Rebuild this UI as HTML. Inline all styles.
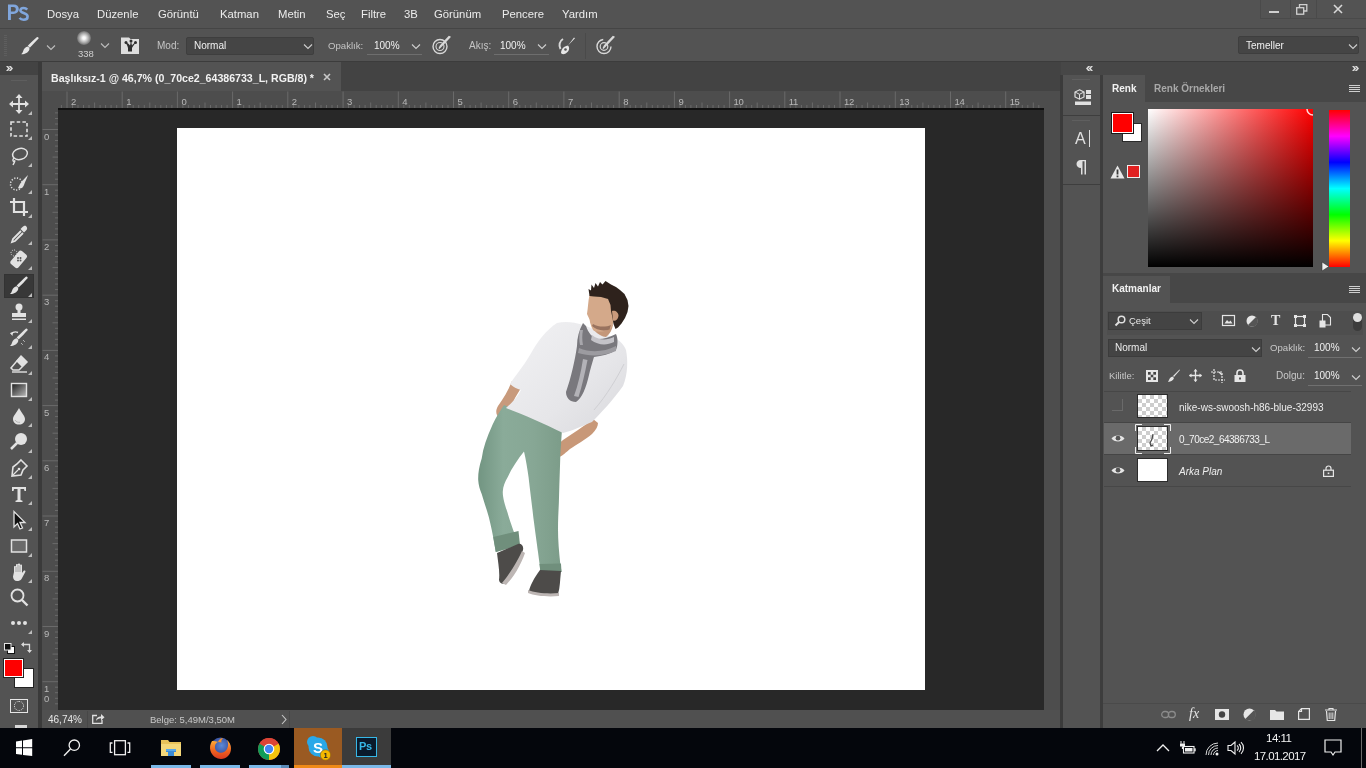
<!DOCTYPE html>
<html><head><meta charset="utf-8">
<style>
*{margin:0;padding:0;box-sizing:border-box}
html,body{width:1366px;height:768px;overflow:hidden;background:#535353}
body{font-family:"Liberation Sans",sans-serif;color:#e6e6e6;position:relative}
.a{position:absolute}
.t{position:absolute;white-space:nowrap;line-height:1;will-change:transform}
svg{position:absolute;overflow:visible}
</style></head><body>
<!-- MENU BAR -->
<div class="a" style="left:0;top:0;width:1366px;height:28px;background:#535353"></div>
<div class="a" style="left:0;top:28px;width:1366px;height:1px;background:#454545"></div>
<svg style="left:7px;top:4px" width="22" height="17" viewBox="0 0 22 17"><path fill-rule="evenodd" d="M1,0.5 L6.5,0.5 C10,0.5 11.8,2.5 11.8,5.1 C11.8,8 9.6,10 6.5,10 L3.9,10 L3.9,16 L1,16 Z M3.9,2.9 L3.9,7.6 L6.2,7.6 C7.9,7.6 8.8,6.6 8.8,5.2 C8.8,3.8 7.9,2.9 6.2,2.9 Z" fill="#80a6dc"/><path d="M20.2,5.6 C19.3,4.5 18,4 16.6,4 C14.6,4 13.4,5 13.4,6.5 C13.4,9.5 20.6,8.6 20.6,12.5 C20.6,14.6 18.9,15.8 16.6,15.8 C14.8,15.8 13.4,15.1 12.6,13.9" fill="none" stroke="#80a6dc" stroke-width="2.6"/></svg>
<div class="t" style="left:47px;top:9px;font-size:11.3px;color:#ececec">Dosya</div>
<div class="t" style="left:97px;top:9px;font-size:11.3px;color:#ececec">Düzenle</div>
<div class="t" style="left:158px;top:9px;font-size:11.3px;color:#ececec">Görüntü</div>
<div class="t" style="left:220px;top:9px;font-size:11.3px;color:#ececec">Katman</div>
<div class="t" style="left:278px;top:9px;font-size:11.3px;color:#ececec">Metin</div>
<div class="t" style="left:326px;top:9px;font-size:11.3px;color:#ececec">Seç</div>
<div class="t" style="left:361px;top:9px;font-size:11.3px;color:#ececec">Filtre</div>
<div class="t" style="left:404px;top:9px;font-size:11.3px;color:#ececec">3B</div>
<div class="t" style="left:434px;top:9px;font-size:11.3px;color:#ececec">Görünüm</div>
<div class="t" style="left:502px;top:9px;font-size:11.3px;color:#ececec">Pencere</div>
<div class="t" style="left:562px;top:9px;font-size:11.3px;color:#ececec">Yardım</div>

<!-- OPTIONS BAR -->
<div class="a" style="left:0;top:29px;width:1366px;height:33px;background:#535353"></div>
<div class="a" style="left:0;top:61px;width:1366px;height:1px;background:#3c3c3c"></div>


<!-- OPTIONS BAR CONTENT -->
<div class="a" style="left:4px;top:35px;width:3px;height:22px;background-image:repeating-linear-gradient(to bottom,#5e5e5e 0,#5e5e5e 1px,transparent 1px,transparent 2px)"></div>
<svg style="left:21px;top:37px" width="18" height="18" viewBox="0 0 18 18"><path d="M17.6,1.6 C15,4.5 11,8.5 8.8,10.8 L6.8,8.8 C9,6.5 13,2.5 15.8,0.2 C16.6,-0.3 18,0.6 17.6,1.6 Z" fill="#e6e6e6"/><path d="M7,9.5 C4.5,9.8 3,11.5 2.2,14 C1.8,15.5 1,16.5 0.3,17.2 C3.5,17.4 7.2,16 8.4,12.5 C8.7,11.5 8.2,10.5 7,9.5 Z" fill="#e6e6e6"/></svg>
<svg style="left:46px;top:44px" width="10" height="7" viewBox="0 0 10 7"><path d="M1,1.5 L5,5.5 L9,1.5" fill="none" stroke="#bdbdbd" stroke-width="1.1"/></svg>
<div class="a" style="left:77px;top:31px;width:14px;height:14px;border-radius:50%;background:radial-gradient(circle,#ffffff 0%,#f4f4f4 15%,rgba(215,215,215,0.7) 45%,rgba(150,150,150,0.25) 75%,rgba(83,83,83,0) 100%)"></div>
<div class="t" style="left:78px;top:49px;font-size:9.5px;color:#d0d0d0">338</div>
<svg style="left:100px;top:42px" width="10" height="7" viewBox="0 0 10 7"><path d="M1,1.5 L5,5.5 L9,1.5" fill="none" stroke="#bdbdbd" stroke-width="1.1"/></svg>
<svg style="left:121px;top:36px" width="18" height="18" viewBox="0 0 18 18"><path d="M0,1.5 L8,1.5 L9.5,3 L18,3 L18,18 L0,18 Z" fill="#dedede"/><path d="M7,15.5 L11,15.5 L11,12 C12,10 13.5,8.5 14.5,6.5 C13,7 12,8 11,9.5 L10,5 L9,9.5 C8,8 6.5,6.8 4.5,6.5 C5.8,8.5 6.5,10 7,12 Z" fill="#2e2e2e"/><circle cx="5" cy="6.5" r="1.5" fill="#2e2e2e"/><circle cx="10" cy="5" r="1.5" fill="#2e2e2e"/><circle cx="14.5" cy="6.5" r="1.5" fill="#2e2e2e"/></svg>
<div class="t" style="left:157px;top:41px;font-size:10px;color:#c4c4c4">Mod:</div>
<div class="a" style="left:186px;top:37px;width:128px;height:18px;background:#454545;border:1px solid #3e3e3e;border-radius:2px"></div>
<div class="t" style="left:194px;top:41px;font-size:10px;color:#f0f0f0">Normal</div>
<svg style="left:303px;top:43px" width="10" height="7" viewBox="0 0 10 7"><path d="M1,1.5 L5,5.5 L9,1.5" fill="none" stroke="#cfcfcf" stroke-width="1.1"/></svg>
<div class="t" style="left:328px;top:41px;font-size:9.6px;color:#c4c4c4">Opaklık:</div>
<div class="t" style="left:374px;top:41px;font-size:10px;color:#f0f0f0">100%</div>
<svg style="left:411px;top:43px" width="10" height="7" viewBox="0 0 10 7"><path d="M1,1.5 L5,5.5 L9,1.5" fill="none" stroke="#cfcfcf" stroke-width="1.1"/></svg>
<div class="a" style="left:367px;top:54px;width:55px;height:1px;background:#6e6e6e"></div>
<svg style="left:432px;top:36px" width="19" height="19" viewBox="0 0 19 19"><circle cx="8" cy="10.5" r="7" fill="none" stroke="#d8d8d8" stroke-width="1.4"/><circle cx="8" cy="10.5" r="4" fill="none" stroke="#d8d8d8" stroke-width="1.1"/><path d="M18,1 L9,10.5 L7,12.5 L8.5,9.5 L17,0.5 Z" fill="#e6e6e6" stroke="#d8d8d8" stroke-width="1.2"/></svg>
<div class="t" style="left:469px;top:41px;font-size:10px;color:#c4c4c4">Akış:</div>
<div class="t" style="left:500px;top:41px;font-size:10px;color:#f0f0f0">100%</div>
<svg style="left:537px;top:43px" width="10" height="7" viewBox="0 0 10 7"><path d="M1,1.5 L5,5.5 L9,1.5" fill="none" stroke="#cfcfcf" stroke-width="1.1"/></svg>
<div class="a" style="left:494px;top:54px;width:55px;height:1px;background:#6e6e6e"></div>
<svg style="left:557px;top:37px" width="19" height="18" viewBox="0 0 19 18"><path d="M6,2 C2.5,4 1.5,8.5 3.5,12" fill="none" stroke="#d8d8d8" stroke-width="2"/><path d="M18,1.2 L11,8.5 C12.5,10 12.5,12.5 11,14.5 C9.5,16.5 7,17.5 5,17 L4,16 C4,14 5,11.5 7,10 C8.5,9 10,8.8 11,8.5 L17,0.5 Z" fill="#e6e6e6"/><circle cx="8.5" cy="12.5" r="1.3" fill="#555"/></svg>
<div class="a" style="left:585px;top:33px;width:1px;height:26px;background:#4a4a4a"></div>
<svg style="left:596px;top:36px" width="19" height="19" viewBox="0 0 19 19"><circle cx="8" cy="10.5" r="7" fill="none" stroke="#d8d8d8" stroke-width="1.4" stroke-dasharray="32,12"/><circle cx="8" cy="10.5" r="3.8" fill="none" stroke="#d8d8d8" stroke-width="1.2"/><path d="M18,1 L9,10.5 L7,12.5 L8.5,9.5 L17,0.5 Z" fill="#e6e6e6" stroke="#d8d8d8" stroke-width="1.2"/></svg>
<!-- workspace dropdown -->
<div class="a" style="left:1238px;top:36px;width:121px;height:18px;background:#454545;border:1px solid #3e3e3e;border-radius:2px"></div>
<div class="t" style="left:1246px;top:41px;font-size:10px;color:#f0f0f0">Temeller</div>
<svg style="left:1348px;top:43px" width="10" height="7" viewBox="0 0 10 7"><path d="M1,1.5 L5,5.5 L9,1.5" fill="none" stroke="#cfcfcf" stroke-width="1.1"/></svg>
<!-- window controls -->
<div class="a" style="left:1260px;top:0;width:106px;height:19px;border-left:1px solid #4a4a4a;border-bottom:1px solid #4a4a4a"></div>
<div class="a" style="left:1290px;top:0;width:1px;height:19px;background:#4a4a4a"></div>
<div class="a" style="left:1316px;top:0;width:1px;height:19px;background:#4a4a4a"></div>
<div class="a" style="left:1269px;top:11px;width:10px;height:2px;background:#d0d0d0"></div>
<svg style="left:1296px;top:4px" width="12" height="11" viewBox="0 0 12 11"><rect x="0.7" y="3.7" width="7" height="6.5" fill="none" stroke="#d0d0d0" stroke-width="1.3"/><path d="M3.5,3.7 L3.5,0.7 L10.8,0.7 L10.8,7 L7.7,7" fill="none" stroke="#d0d0d0" stroke-width="1.3"/></svg>
<svg style="left:1333px;top:4px" width="10" height="10" viewBox="0 0 10 10"><path d="M1,1 L9,9 M9,1 L1,9" stroke="#d8d8d8" stroke-width="1.6"/></svg>
<!-- PANEL STRIP -->
<div class="a" style="left:0;top:62px;width:38px;height:13px;background:#434343"></div>
<div class="a" style="left:38px;top:62px;width:4px;height:666px;background:#3a3a3a"></div>

<!-- TOOLBAR -->
<div class="a" style="left:0;top:75px;width:38px;height:653px;background:#535353"></div>


<!-- TOOLBAR CONTENT -->
<svg style="left:6px;top:66px" width="7" height="5" viewBox="0 0 10 7"><path d="M0,0 L3,0 L6,3.5 L3,7 L0,7 L3,3.5 Z M4,0 L7,0 L10,3.5 L7,7 L4,7 L7,3.5 Z" fill="#d8d8d8"/></svg>
<div class="a" style="left:11px;top:80px;width:16px;height:1px;background:#5e5e5e"></div>
<div class="a" style="left:4px;top:274px;width:30px;height:24px;background:#383838;border:1px solid #333"></div>
<svg style="left:9px;top:94px" width="20" height="20" viewBox="0 0 20 20"><path d="M10,1 L10,19 M1,10 L19,10" stroke="#e2e2e2" stroke-width="1.8"/><path d="M10,0 L6.5,4 L13.5,4 Z M10,20 L6.5,16 L13.5,16 Z M0,10 L4,6.5 L4,13.5 Z M20,10 L16,6.5 L16,13.5 Z" fill="#e2e2e2"/></svg>
<svg style="left:28px;top:111px" width="4" height="4" viewBox="0 0 4 4"><path d="M4,0 L4,4 L0,4 Z" fill="#bdbdbd"/></svg>
<svg style="left:9px;top:119px" width="20" height="20" viewBox="0 0 20 20"><rect x="2" y="3" width="16" height="14" fill="none" stroke="#e2e2e2" stroke-width="1.6" stroke-dasharray="3.5,2.2"/></svg>
<svg style="left:28px;top:136px" width="4" height="4" viewBox="0 0 4 4"><path d="M4,0 L4,4 L0,4 Z" fill="#bdbdbd"/></svg>
<svg style="left:9px;top:146px" width="20" height="20" viewBox="0 0 20 20"><ellipse cx="11" cy="8" rx="7.5" ry="5.5" fill="none" stroke="#e2e2e2" stroke-width="1.5" transform="rotate(-15 11 8)"/><path d="M5,12 C3,14 4,16 5.5,15 C6.5,14 5,17 4,19" fill="none" stroke="#e2e2e2" stroke-width="1.4"/></svg>
<svg style="left:28px;top:163px" width="4" height="4" viewBox="0 0 4 4"><path d="M4,0 L4,4 L0,4 Z" fill="#bdbdbd"/></svg>
<svg style="left:9px;top:173px" width="20" height="20" viewBox="0 0 20 20"><circle cx="7.5" cy="11" r="6" fill="none" stroke="#e2e2e2" stroke-width="1.5" stroke-dasharray="1.2,1.6"/><path d="M19,2 C16,5 13,8 11,11 L9,15 C11,16 14,15 15,12 C16,9 18,5 19,2 Z" fill="#e2e2e2"/></svg>
<svg style="left:28px;top:190px" width="4" height="4" viewBox="0 0 4 4"><path d="M4,0 L4,4 L0,4 Z" fill="#bdbdbd"/></svg>
<svg style="left:9px;top:197px" width="20" height="20" viewBox="0 0 20 20"><path d="M5,1 L5,15 L19,15 M1,5 L15,5 L15,19" fill="none" stroke="#e2e2e2" stroke-width="2.2"/></svg>
<svg style="left:28px;top:214px" width="4" height="4" viewBox="0 0 4 4"><path d="M4,0 L4,4 L0,4 Z" fill="#bdbdbd"/></svg>
<svg style="left:9px;top:224px" width="20" height="20" viewBox="0 0 20 20"><path d="M17,2 C18.5,3.5 18.5,5 17,6.5 L15,8.5 L11.5,5 L13.5,3 C15,1.5 16,1.5 17,2 Z" fill="#e2e2e2"/><path d="M12,7 L4,15 L3,18 L6,17 L14,9" fill="none" stroke="#e2e2e2" stroke-width="1.8"/></svg>
<svg style="left:28px;top:241px" width="4" height="4" viewBox="0 0 4 4"><path d="M4,0 L4,4 L0,4 Z" fill="#bdbdbd"/></svg>
<svg style="left:9px;top:249px" width="20" height="20" viewBox="0 0 20 20"><rect x="5" y="2" width="10" height="17" rx="2.5" transform="rotate(40 10 10)" fill="#e2e2e2"/><circle cx="9" cy="9" r="1" fill="#555"/><circle cx="11.5" cy="9" r="1" fill="#555"/><circle cx="9" cy="11.5" r="1" fill="#555"/><circle cx="11.5" cy="11.5" r="1" fill="#555"/><circle cx="5" cy="4" r="3" fill="none" stroke="#e2e2e2" stroke-width="1" stroke-dasharray="1,1.3"/></svg>
<svg style="left:28px;top:266px" width="4" height="4" viewBox="0 0 4 4"><path d="M4,0 L4,4 L0,4 Z" fill="#bdbdbd"/></svg>
<svg style="left:9px;top:276px" width="20" height="20" viewBox="0 0 20 20"><path d="M18.6,2.2 C16,5 12,9.3 9.6,11.6 L7.6,9.6 C10,7.3 14,3.2 16.8,0.8 C17.6,0.2 19,1.2 18.6,2.2 Z" fill="#e2e2e2"/><path d="M7.8,10.2 C5.3,10.5 3.8,12.2 3,14.7 C2.6,16.2 1.8,17.2 1.1,17.9 C4.3,18.1 8,16.7 9.2,13.2 C9.5,12.2 9,11.2 7.8,10.2 Z" fill="#e2e2e2"/></svg>
<svg style="left:28px;top:293px" width="4" height="4" viewBox="0 0 4 4"><path d="M4,0 L4,4 L0,4 Z" fill="#bdbdbd"/></svg>
<svg style="left:9px;top:302px" width="20" height="20" viewBox="0 0 20 20"><circle cx="10" cy="5" r="3.5" fill="#e2e2e2"/><rect x="8.5" y="7" width="3" height="4" fill="#e2e2e2"/><rect x="3" y="11" width="14" height="4" fill="#e2e2e2"/><rect x="3" y="16.5" width="14" height="1.5" fill="#e2e2e2"/></svg>
<svg style="left:28px;top:319px" width="4" height="4" viewBox="0 0 4 4"><path d="M4,0 L4,4 L0,4 Z" fill="#bdbdbd"/></svg>
<svg style="left:9px;top:328px" width="20" height="20" viewBox="0 0 20 20"><path d="M18.6,2.2 C16,5 12,9.3 9.6,11.6 L7.6,9.6 C10,7.3 14,3.2 16.8,0.8 C17.6,0.2 19,1.2 18.6,2.2 Z" fill="#e2e2e2"/><path d="M7.8,10.2 C5.3,10.5 3.8,12.2 3,14.7 C2.6,16.2 1.8,17.2 1.1,17.9 C4.3,18.1 8,16.7 9.2,13.2 C9.5,12.2 9,11.2 7.8,10.2 Z" fill="#e2e2e2"/><path d="M2,6 C4,4 7,3.5 9,4.5" fill="none" stroke="#e2e2e2" stroke-width="1.4"/><path d="M1,5 L3.5,8 L4,4 Z" fill="#e2e2e2"/><path d="M14,12 L16,14 M12,15 L14,17" stroke="#e2e2e2" stroke-width="1" stroke-dasharray="1,1"/></svg>
<svg style="left:28px;top:345px" width="4" height="4" viewBox="0 0 4 4"><path d="M4,0 L4,4 L0,4 Z" fill="#bdbdbd"/></svg>
<svg style="left:9px;top:354px" width="20" height="20" viewBox="0 0 20 20"><path d="M12,2 L18,8 L10,16 L4,16 L2,14 Z" fill="none" stroke="#e2e2e2" stroke-width="1.5"/><path d="M12,2 L18,8 L13,13 L7,7 Z" fill="#e2e2e2"/><path d="M3,18 L18,18" stroke="#e2e2e2" stroke-width="1.4"/></svg>
<svg style="left:28px;top:371px" width="4" height="4" viewBox="0 0 4 4"><path d="M4,0 L4,4 L0,4 Z" fill="#bdbdbd"/></svg>
<svg style="left:9px;top:380px" width="20" height="20" viewBox="0 0 20 20"><defs><linearGradient id="gr" x1="0" y1="0" x2="1" y2="1"><stop offset="0" stop-color="#1a1a1a"/><stop offset="1" stop-color="#bcbcbc"/></linearGradient></defs><rect x="2.5" y="3.5" width="15" height="13" fill="url(#gr)" stroke="#e2e2e2" stroke-width="1.4"/></svg>
<svg style="left:28px;top:397px" width="4" height="4" viewBox="0 0 4 4"><path d="M4,0 L4,4 L0,4 Z" fill="#bdbdbd"/></svg>
<svg style="left:9px;top:406px" width="20" height="20" viewBox="0 0 20 20"><path d="M10,2 C12,6 16,10 16,13 C16,16.5 13.5,18.5 10,18.5 C6.5,18.5 4,16.5 4,13 C4,10 8,6 10,2 Z" fill="#e2e2e2"/><path d="M6,14 C7,16 9,16.5 11,16.3" fill="none" stroke="#aaa" stroke-width="0.8"/></svg>
<svg style="left:28px;top:423px" width="4" height="4" viewBox="0 0 4 4"><path d="M4,0 L4,4 L0,4 Z" fill="#bdbdbd"/></svg>
<svg style="left:9px;top:432px" width="20" height="20" viewBox="0 0 20 20"><circle cx="12" cy="7" r="6" fill="#e2e2e2"/><path d="M8,11 L2,17" stroke="#e2e2e2" stroke-width="2.5"/></svg>
<svg style="left:28px;top:449px" width="4" height="4" viewBox="0 0 4 4"><path d="M4,0 L4,4 L0,4 Z" fill="#bdbdbd"/></svg>
<svg style="left:9px;top:458px" width="20" height="20" viewBox="0 0 20 20"><path d="M12,2 L18,8 L14,12 L12,17 L3,18 L4,9 L8,6 Z" fill="none" stroke="#e2e2e2" stroke-width="1.6"/><path d="M4,17 L9,12" stroke="#e2e2e2" stroke-width="1.2"/><circle cx="10" cy="11" r="1.3" fill="#e2e2e2"/></svg>
<svg style="left:28px;top:475px" width="4" height="4" viewBox="0 0 4 4"><path d="M4,0 L4,4 L0,4 Z" fill="#bdbdbd"/></svg>
<svg style="left:9px;top:484px" width="20" height="20" viewBox="0 0 20 20"><path d="M3,3 L17,3 L17,7 L15.5,7 L15,5 L11.5,5 L11.5,16 L13.5,16.8 L13.5,18 L6.5,18 L6.5,16.8 L8.5,16 L8.5,5 L5,5 L4.5,7 L3,7 Z" fill="#e2e2e2"/></svg>
<svg style="left:28px;top:501px" width="4" height="4" viewBox="0 0 4 4"><path d="M4,0 L4,4 L0,4 Z" fill="#bdbdbd"/></svg>
<svg style="left:9px;top:510px" width="20" height="20" viewBox="0 0 20 20"><path d="M5,1.5 L5,17 L8.5,13.5 L11,19 L13.5,18 L11,12.5 L16,12.5 Z" fill="#111" stroke="#e2e2e2" stroke-width="1.3"/></svg>
<svg style="left:28px;top:527px" width="4" height="4" viewBox="0 0 4 4"><path d="M4,0 L4,4 L0,4 Z" fill="#bdbdbd"/></svg>
<svg style="left:9px;top:536px" width="20" height="20" viewBox="0 0 20 20"><rect x="2.5" y="4" width="15" height="12" fill="#6a6a6a" stroke="#e2e2e2" stroke-width="1.5"/></svg>
<svg style="left:28px;top:553px" width="4" height="4" viewBox="0 0 4 4"><path d="M4,0 L4,4 L0,4 Z" fill="#bdbdbd"/></svg>
<svg style="left:9px;top:562px" width="20" height="20" viewBox="0 0 20 20"><path d="M5,10 L5,5 C5,3.8 7,3.8 7,5 L7,3 C7,1.8 9,1.8 9,3 L9,2.5 C9,1.3 11,1.3 11,2.5 L11,3.5 C11,2.3 13,2.3 13,3.5 L13,11 L14.5,9 C15.5,8 17,8.8 16.3,10 L12.5,17 C11.5,18.5 10,19 8,19 C5.5,19 4,17 4,14.5 Z" fill="#e2e2e2"/><path d="M7,5 L7,10 M9,3 L9,10 M11,3.5 L11,10" stroke="#888" stroke-width="0.7"/></svg>
<svg style="left:28px;top:579px" width="4" height="4" viewBox="0 0 4 4"><path d="M4,0 L4,4 L0,4 Z" fill="#bdbdbd"/></svg>
<svg style="left:9px;top:587px" width="20" height="20" viewBox="0 0 20 20"><circle cx="8.5" cy="8.5" r="6" fill="none" stroke="#e2e2e2" stroke-width="1.8"/><path d="M13,13 L18.5,18.5" stroke="#e2e2e2" stroke-width="2.4"/></svg>
<svg style="left:9px;top:613px" width="20" height="20" viewBox="0 0 20 20"><circle cx="4" cy="10" r="2" fill="#e2e2e2"/><circle cx="10" cy="10" r="2" fill="#e2e2e2"/><circle cx="16" cy="10" r="2" fill="#e2e2e2"/></svg>
<svg style="left:28px;top:630px" width="4" height="4" viewBox="0 0 4 4"><path d="M4,0 L4,4 L0,4 Z" fill="#bdbdbd"/></svg>
<svg style="left:4px;top:643px" width="11" height="11" viewBox="0 0 11 11"><rect x="3.5" y="3.5" width="7" height="7" fill="#fff" stroke="#111" stroke-width="1"/><rect x="0.5" y="0.5" width="6.5" height="6.5" fill="#111" stroke="#e6e6e6" stroke-width="1"/></svg>
<svg style="left:21px;top:641px" width="12" height="12" viewBox="0 0 12 12"><path d="M1,3.5 L8.5,3.5 L8.5,11" fill="none" stroke="#d8d8d8" stroke-width="1.3"/><path d="M0,3.5 L3,1 L3,6 Z M8.5,12 L6,9 L11,9 Z" fill="#d8d8d8"/></svg>
<div class="a" style="left:14px;top:668px;width:20px;height:20px;background:#fff;border:1px solid #222"></div>
<div class="a" style="left:4px;top:659px;width:19px;height:18px;background:#fe0000;border:1px solid #fff;outline:1px solid #222"></div>
<div class="a" style="left:10px;top:699px;width:18px;height:14px;border:1px solid #e6e6e6"></div>
<div class="a" style="left:14px;top:701px;width:10px;height:10px;border:1px dotted #e6e6e6;border-radius:50%"></div>
<div class="a" style="left:15px;top:725px;width:12px;height:3px;background:#d8d8d8"></div>
<!-- DOC TAB BAR -->
<div class="a" style="left:42px;top:62px;width:1019px;height:29px;background:#434343"></div>
<div class="a" style="left:42px;top:62px;width:299px;height:29px;background:#535353"></div>
<div class="t" style="left:51px;top:73px;font-size:10.6px;font-weight:700;color:#f2f2f2">Başlıksız-1 @ 46,7% (0_70ce2_64386733_L, RGB/8) *</div>

<!-- RULERS -->
<div class="a" style="left:42px;top:91px;width:1019px;height:17px;background:#4d4d4d"></div>
<div class="a" style="left:42px;top:91px;width:16px;height:619px;background:#4d4d4d"></div>


<!-- RULER TICKS -->
<svg style="left:0;top:0" width="1366" height="768" viewBox="0 0 1366 768">
<path d="M61.4,105 L61.4,108 M67.0,91.5 L67.0,108 M72.5,105 L72.5,108 M78.0,105 L78.0,108 M83.5,105 L83.5,108 M89.0,105 L89.0,108 M94.6,102.5 L94.6,108 M100.1,105 L100.1,108 M105.6,105 L105.6,108 M111.1,105 L111.1,108 M116.7,105 L116.7,108 M122.2,91.5 L122.2,108 M127.7,105 L127.7,108 M133.2,105 L133.2,108 M138.7,105 L138.7,108 M144.3,105 L144.3,108 M149.8,102.5 L149.8,108 M155.3,105 L155.3,108 M160.8,105 L160.8,108 M166.4,105 L166.4,108 M171.9,105 L171.9,108 M177.4,91.5 L177.4,108 M182.9,105 L182.9,108 M188.4,105 L188.4,108 M194.0,105 L194.0,108 M199.5,105 L199.5,108 M205.0,102.5 L205.0,108 M210.5,105 L210.5,108 M216.1,105 L216.1,108 M221.6,105 L221.6,108 M227.1,105 L227.1,108 M232.6,91.5 L232.6,108 M238.1,105 L238.1,108 M243.7,105 L243.7,108 M249.2,105 L249.2,108 M254.7,105 L254.7,108 M260.2,102.5 L260.2,108 M265.8,105 L265.8,108 M271.3,105 L271.3,108 M276.8,105 L276.8,108 M282.3,105 L282.3,108 M287.8,91.5 L287.8,108 M293.4,105 L293.4,108 M298.9,105 L298.9,108 M304.4,105 L304.4,108 M309.9,105 L309.9,108 M315.5,102.5 L315.5,108 M321.0,105 L321.0,108 M326.5,105 L326.5,108 M332.0,105 L332.0,108 M337.5,105 L337.5,108 M343.1,91.5 L343.1,108 M348.6,105 L348.6,108 M354.1,105 L354.1,108 M359.6,105 L359.6,108 M365.1,105 L365.1,108 M370.7,102.5 L370.7,108 M376.2,105 L376.2,108 M381.7,105 L381.7,108 M387.2,105 L387.2,108 M392.8,105 L392.8,108 M398.3,91.5 L398.3,108 M403.8,105 L403.8,108 M409.3,105 L409.3,108 M414.8,105 L414.8,108 M420.4,105 L420.4,108 M425.9,102.5 L425.9,108 M431.4,105 L431.4,108 M436.9,105 L436.9,108 M442.5,105 L442.5,108 M448.0,105 L448.0,108 M453.5,91.5 L453.5,108 M459.0,105 L459.0,108 M464.5,105 L464.5,108 M470.1,105 L470.1,108 M475.6,105 L475.6,108 M481.1,102.5 L481.1,108 M486.6,105 L486.6,108 M492.2,105 L492.2,108 M497.7,105 L497.7,108 M503.2,105 L503.2,108 M508.7,91.5 L508.7,108 M514.2,105 L514.2,108 M519.8,105 L519.8,108 M525.3,105 L525.3,108 M530.8,105 L530.8,108 M536.3,102.5 L536.3,108 M541.9,105 L541.9,108 M547.4,105 L547.4,108 M552.9,105 L552.9,108 M558.4,105 L558.4,108 M563.9,91.5 L563.9,108 M569.5,105 L569.5,108 M575.0,105 L575.0,108 M580.5,105 L580.5,108 M586.0,105 L586.0,108 M591.5,102.5 L591.5,108 M597.1,105 L597.1,108 M602.6,105 L602.6,108 M608.1,105 L608.1,108 M613.6,105 L613.6,108 M619.2,91.5 L619.2,108 M624.7,105 L624.7,108 M630.2,105 L630.2,108 M635.7,105 L635.7,108 M641.2,105 L641.2,108 M646.8,102.5 L646.8,108 M652.3,105 L652.3,108 M657.8,105 L657.8,108 M663.3,105 L663.3,108 M668.9,105 L668.9,108 M674.4,91.5 L674.4,108 M679.9,105 L679.9,108 M685.4,105 L685.4,108 M690.9,105 L690.9,108 M696.5,105 L696.5,108 M702.0,102.5 L702.0,108 M707.5,105 L707.5,108 M713.0,105 L713.0,108 M718.6,105 L718.6,108 M724.1,105 L724.1,108 M729.6,91.5 L729.6,108 M735.1,105 L735.1,108 M740.6,105 L740.6,108 M746.2,105 L746.2,108 M751.7,105 L751.7,108 M757.2,102.5 L757.2,108 M762.7,105 L762.7,108 M768.3,105 L768.3,108 M773.8,105 L773.8,108 M779.3,105 L779.3,108 M784.8,91.5 L784.8,108 M790.3,105 L790.3,108 M795.9,105 L795.9,108 M801.4,105 L801.4,108 M806.9,105 L806.9,108 M812.4,102.5 L812.4,108 M818.0,105 L818.0,108 M823.5,105 L823.5,108 M829.0,105 L829.0,108 M834.5,105 L834.5,108 M840.0,91.5 L840.0,108 M845.6,105 L845.6,108 M851.1,105 L851.1,108 M856.6,105 L856.6,108 M862.1,105 L862.1,108 M867.6,102.5 L867.6,108 M873.2,105 L873.2,108 M878.7,105 L878.7,108 M884.2,105 L884.2,108 M889.7,105 L889.7,108 M895.3,91.5 L895.3,108 M900.8,105 L900.8,108 M906.3,105 L906.3,108 M911.8,105 L911.8,108 M917.3,105 L917.3,108 M922.9,102.5 L922.9,108 M928.4,105 L928.4,108 M933.9,105 L933.9,108 M939.4,105 L939.4,108 M945.0,105 L945.0,108 M950.5,91.5 L950.5,108 M956.0,105 L956.0,108 M961.5,105 L961.5,108 M967.0,105 L967.0,108 M972.6,105 L972.6,108 M978.1,102.5 L978.1,108 M983.6,105 L983.6,108 M989.1,105 L989.1,108 M994.7,105 L994.7,108 M1000.2,105 L1000.2,108 M1005.7,91.5 L1005.7,108 M1011.2,105 L1011.2,108 M1016.7,105 L1016.7,108 M1022.3,105 L1022.3,108 M1027.8,105 L1027.8,108 M1033.3,102.5 L1033.3,108 M1038.8,105 L1038.8,108" stroke="#6a6a6a" stroke-width="1" fill="none"/>
<text x="71.0" y="104.5" font-size="9.5" letter-spacing="-0.4" fill="#b8b8b8" font-family="Liberation Sans">2</text>
<text x="126.2" y="104.5" font-size="9.5" letter-spacing="-0.4" fill="#b8b8b8" font-family="Liberation Sans">1</text>
<text x="181.4" y="104.5" font-size="9.5" letter-spacing="-0.4" fill="#b8b8b8" font-family="Liberation Sans">0</text>
<text x="236.6" y="104.5" font-size="9.5" letter-spacing="-0.4" fill="#b8b8b8" font-family="Liberation Sans">1</text>
<text x="291.8" y="104.5" font-size="9.5" letter-spacing="-0.4" fill="#b8b8b8" font-family="Liberation Sans">2</text>
<text x="347.1" y="104.5" font-size="9.5" letter-spacing="-0.4" fill="#b8b8b8" font-family="Liberation Sans">3</text>
<text x="402.3" y="104.5" font-size="9.5" letter-spacing="-0.4" fill="#b8b8b8" font-family="Liberation Sans">4</text>
<text x="457.5" y="104.5" font-size="9.5" letter-spacing="-0.4" fill="#b8b8b8" font-family="Liberation Sans">5</text>
<text x="512.7" y="104.5" font-size="9.5" letter-spacing="-0.4" fill="#b8b8b8" font-family="Liberation Sans">6</text>
<text x="567.9" y="104.5" font-size="9.5" letter-spacing="-0.4" fill="#b8b8b8" font-family="Liberation Sans">7</text>
<text x="623.2" y="104.5" font-size="9.5" letter-spacing="-0.4" fill="#b8b8b8" font-family="Liberation Sans">8</text>
<text x="678.4" y="104.5" font-size="9.5" letter-spacing="-0.4" fill="#b8b8b8" font-family="Liberation Sans">9</text>
<text x="733.6" y="104.5" font-size="9.5" letter-spacing="-0.4" fill="#b8b8b8" font-family="Liberation Sans">10</text>
<text x="788.8" y="104.5" font-size="9.5" letter-spacing="-0.4" fill="#b8b8b8" font-family="Liberation Sans">11</text>
<text x="844.0" y="104.5" font-size="9.5" letter-spacing="-0.4" fill="#b8b8b8" font-family="Liberation Sans">12</text>
<text x="899.3" y="104.5" font-size="9.5" letter-spacing="-0.4" fill="#b8b8b8" font-family="Liberation Sans">13</text>
<text x="954.5" y="104.5" font-size="9.5" letter-spacing="-0.4" fill="#b8b8b8" font-family="Liberation Sans">14</text>
<text x="1009.7" y="104.5" font-size="9.5" letter-spacing="-0.4" fill="#b8b8b8" font-family="Liberation Sans">15</text>
<path d="M55,112.9 L58,112.9 M55,118.5 L58,118.5 M55,124.0 L58,124.0 M42.5,129.5 L58,129.5 M55,135.0 L58,135.0 M55,140.5 L58,140.5 M55,146.1 L58,146.1 M55,151.6 L58,151.6 M52.5,157.1 L58,157.1 M55,162.6 L58,162.6 M55,168.2 L58,168.2 M55,173.7 L58,173.7 M55,179.2 L58,179.2 M42.5,184.7 L58,184.7 M55,190.2 L58,190.2 M55,195.8 L58,195.8 M55,201.3 L58,201.3 M55,206.8 L58,206.8 M52.5,212.3 L58,212.3 M55,217.9 L58,217.9 M55,223.4 L58,223.4 M55,228.9 L58,228.9 M55,234.4 L58,234.4 M42.5,239.9 L58,239.9 M55,245.5 L58,245.5 M55,251.0 L58,251.0 M55,256.5 L58,256.5 M55,262.0 L58,262.0 M52.5,267.6 L58,267.6 M55,273.1 L58,273.1 M55,278.6 L58,278.6 M55,284.1 L58,284.1 M55,289.6 L58,289.6 M42.5,295.2 L58,295.2 M55,300.7 L58,300.7 M55,306.2 L58,306.2 M55,311.7 L58,311.7 M55,317.2 L58,317.2 M52.5,322.8 L58,322.8 M55,328.3 L58,328.3 M55,333.8 L58,333.8 M55,339.3 L58,339.3 M55,344.9 L58,344.9 M42.5,350.4 L58,350.4 M55,355.9 L58,355.9 M55,361.4 L58,361.4 M55,366.9 L58,366.9 M55,372.5 L58,372.5 M52.5,378.0 L58,378.0 M55,383.5 L58,383.5 M55,389.0 L58,389.0 M55,394.6 L58,394.6 M55,400.1 L58,400.1 M42.5,405.6 L58,405.6 M55,411.1 L58,411.1 M55,416.6 L58,416.6 M55,422.2 L58,422.2 M55,427.7 L58,427.7 M52.5,433.2 L58,433.2 M55,438.7 L58,438.7 M55,444.3 L58,444.3 M55,449.8 L58,449.8 M55,455.3 L58,455.3 M42.5,460.8 L58,460.8 M55,466.3 L58,466.3 M55,471.9 L58,471.9 M55,477.4 L58,477.4 M55,482.9 L58,482.9 M52.5,488.4 L58,488.4 M55,494.0 L58,494.0 M55,499.5 L58,499.5 M55,505.0 L58,505.0 M55,510.5 L58,510.5 M42.5,516.0 L58,516.0 M55,521.6 L58,521.6 M55,527.1 L58,527.1 M55,532.6 L58,532.6 M55,538.1 L58,538.1 M52.5,543.6 L58,543.6 M55,549.2 L58,549.2 M55,554.7 L58,554.7 M55,560.2 L58,560.2 M55,565.7 L58,565.7 M42.5,571.3 L58,571.3 M55,576.8 L58,576.8 M55,582.3 L58,582.3 M55,587.8 L58,587.8 M55,593.3 L58,593.3 M52.5,598.9 L58,598.9 M55,604.4 L58,604.4 M55,609.9 L58,609.9 M55,615.4 L58,615.4 M55,621.0 L58,621.0 M42.5,626.5 L58,626.5 M55,632.0 L58,632.0 M55,637.5 L58,637.5 M55,643.0 L58,643.0 M55,648.6 L58,648.6 M52.5,654.1 L58,654.1 M55,659.6 L58,659.6 M55,665.1 L58,665.1 M55,670.7 L58,670.7 M55,676.2 L58,676.2 M42.5,681.7 L58,681.7 M55,687.2 L58,687.2 M55,692.7 L58,692.7 M55,698.3 L58,698.3 M55,703.8 L58,703.8" stroke="#6a6a6a" stroke-width="1" fill="none"/>
<text x="44" y="139.5" font-size="9.5" fill="#b8b8b8" font-family="Liberation Sans">0</text>
<text x="44" y="194.7" font-size="9.5" fill="#b8b8b8" font-family="Liberation Sans">1</text>
<text x="44" y="249.9" font-size="9.5" fill="#b8b8b8" font-family="Liberation Sans">2</text>
<text x="44" y="305.2" font-size="9.5" fill="#b8b8b8" font-family="Liberation Sans">3</text>
<text x="44" y="360.4" font-size="9.5" fill="#b8b8b8" font-family="Liberation Sans">4</text>
<text x="44" y="415.6" font-size="9.5" fill="#b8b8b8" font-family="Liberation Sans">5</text>
<text x="44" y="470.8" font-size="9.5" fill="#b8b8b8" font-family="Liberation Sans">6</text>
<text x="44" y="526.0" font-size="9.5" fill="#b8b8b8" font-family="Liberation Sans">7</text>
<text x="44" y="581.3" font-size="9.5" fill="#b8b8b8" font-family="Liberation Sans">8</text>
<text x="44" y="636.5" font-size="9.5" fill="#b8b8b8" font-family="Liberation Sans">9</text>
<text x="44" y="691.7" font-size="9.5" fill="#b8b8b8" font-family="Liberation Sans">1</text>
<text x="44" y="701.7" font-size="9.5" fill="#b8b8b8" font-family="Liberation Sans">0</text>
</svg>
<!-- CANVAS -->
<div class="a" style="left:58px;top:108px;width:986px;height:602px;background:#282828"></div>
<div class="a" style="left:58px;top:108px;width:986px;height:2px;background:#111"></div>
<div class="a" style="left:177px;top:128px;width:748px;height:562px;background:#ffffff"></div>

<!-- FIGURE -->
<svg class="a" style="left:0;top:0" width="1366" height="768" viewBox="0 0 1366 768">
<defs>
<linearGradient id="pg" x1="0" y1="0" x2="1" y2="0"><stop offset="0" stop-color="#729582"/><stop offset="0.3" stop-color="#8aab99"/><stop offset="0.65" stop-color="#87a795"/><stop offset="1" stop-color="#7c9c89"/></linearGradient>
<linearGradient id="sg" x1="0" y1="0" x2="1" y2="1"><stop offset="0" stop-color="#f2f2f4"/><stop offset="0.6" stop-color="#e6e6e9"/><stop offset="1" stop-color="#d8d8dc"/></linearGradient>
<filter id="soft" x="-10%" y="-10%" width="120%" height="120%"><feGaussianBlur stdDeviation="0.45"/></filter>
</defs>
<g filter="url(#soft)">
<!-- left forearm/hand -->
<path d="M512,381 C508,391 503,399 498,406 C495,411 496,416 500,418 C505,415 510,410 515,398 L521,388 Z" fill="#c89a7b"/>
<!-- right forearm/hand -->
<path d="M593,419 C583,427 572,434 563,440 C557,444 556,452 559,457 C563,456 566,452 570,449 C576,445 585,440 592,434 C596,430 598,426 598,423 Z" fill="#c89878"/>
<!-- pants -->
<path d="M504,405 C498,414 494,421 492,426 C487,437 483,448 481.7,458.6 C479,467 478,474 478.2,480 C478.5,485 480,490 481.7,494 C484,502 487,510 488.8,517 C491,526 493,535 494,542 L495.8,552 L520,545 C517,540 515.5,535 514.6,533.7 C511,524 509,518 507.5,512.6 C505,505 502.5,497 502.8,491.5 C503,486 505,482 507.5,477.4 C512,468 518,459 524,451.6 C526,460 527.5,470 528.6,477.4 C530,490 532,505 533.3,517.3 C535,530 537,545 538,552 C539,560 540,566 540.4,572 L561.5,572 C561,567 560.5,566 560.3,564 C559,552 558,540 558,529 C558,515 559,505 559.1,494 C559.5,480 560,468 560.3,456 C561,446 561.5,436 562,430 C543,422 523,413 504,405 Z" fill="url(#pg)"/>
<!-- cuffs darker -->
<path d="M493.3,537 L518.5,531 L520,545 L495.8,552 Z" fill="#6f8f7b"/>
<path d="M539.5,564 L561,563.5 L561.5,572 L540.4,572 Z" fill="#6f8f7b"/>
<!-- shoes -->
<path d="M497,553 C498,562 500,572 499,580 C500,585 505,585 509,580 C515,570 520,560 523,550 C524,546 521,543 518,544 Z" fill="#4d4c4a"/>
<path d="M502,583 C509,575 517,562 522,551 L525,553 C521,565 513,578 506,585 Z" fill="#bdb6b4"/>
<path d="M540,570 C534,578 530,586 529,591 C532,594 546,595 558,594 C560,588 560,580 561,571 Z" fill="#4d4c4a"/>
<path d="M528,590 C535,593 548,594 559,593 L559,596 C548,597 535,596 528,593 Z" fill="#bdb6b4"/>
<!-- shirt -->
<path d="M557,323 C546,330 537,342 530,355 C523,367 515,376 510,384 C513,387 517,389 521,390 C518,396 513,402 506,408 C524,415 545,424 563,433 C572,431 582,426 592,422 C601,413 613,400 623,386 C628,374 628,360 626,350 C623,343 619,340 614,338 C604,333 594,329 583,325 C574,322 565,321 557,323 Z" fill="url(#sg)"/>
<path d="M624,364 C617,378 607,395 594,410" fill="none" stroke="#cfcfd3" stroke-width="1"/>
<!-- neck -->
<path d="M590,320 C592,330 598,336 606,337 C610,334 612,330 613,325 L604,316 Z" fill="#c49779"/>
<!-- scarf -->
<path d="M583,323 C579,330 577,338 577,346 C575,360 571,378 566,392 C566,398 570,402 576,402 C582,398 586,388 589,375 C591,367 593,360 594,357 C602,356 610,354 616,350 C618,345 618,338 616,334 C610,337 604,339 598,339 C592,338 588,332 586,326 Z" fill="#79787d"/>
<path d="M592,335 C598,340 606,341 614,337 L614,342 C606,346 598,345 591,340 Z" fill="#c4c3c8"/>
<path d="M579,348 C591,353 604,352 616,346 L616,351 C604,356 591,357 578,353 Z" fill="#9c9ba0"/>
<path d="M583,359 C581,372 578,385 574,396 L578.5,397 C582,386 585,373 587.5,360 Z" fill="#b3b2b7"/>
<path d="M580,330 C579,336 579,341 580,345 L583,345 C582,340 582,335 583,330 Z" fill="#a8a7ac"/>
<!-- face -->
<path d="M589.5,295 C588,302 588,308 587,314 C588,317 590,319 590,322 C591,326 592,329 594,331 C600,332.5 607,331.5 611,328 C614,323 615,316 614,310 C613,305 611,300 607,298 C601,296 595,295 589.5,295 Z" fill="#d4a98a"/>
<!-- hair -->
<path d="M588.5,289 L591,290.5 L591.5,284.5 L594,288 L595.5,283 L598,286.5 L600,282 L602.5,284.5 L605.5,281 L611,284.5 L616,287 L620,290 L624.5,294 L627.5,300 L628.5,306 L627.5,312 L625,318 L621.5,323.5 L618,327.5 L615.5,329 L613.5,324 L612.5,318 L611,311 L610.5,305 L608,299 L601,297 L594,296.5 L589.5,296 Z" fill="#2e241d"/>
<path d="M612,311 C615,310 618.5,312 618.5,316 C618,320 615,321.5 613,320.5 Z" fill="#c99a7b"/>
<path d="M592,326 C596,330 603,331.5 609.5,329.5 L611,325 C606,327 599,327.5 593,324 Z" fill="#86624f" opacity="0.75"/>
</g>
</svg>
<!-- right scroll area -->
<div class="a" style="left:1044px;top:108px;width:17px;height:602px;background:#4d4d4d"></div>

<!-- STATUS BAR -->
<div class="a" style="left:42px;top:710px;width:1019px;height:18px;background:#505050"></div>
<div class="t" style="left:48px;top:715px;font-size:10px;color:#e6e6e6">46,74%</div>
<div class="a" style="left:87px;top:711px;width:1px;height:17px;background:#474747"></div>
<svg style="left:92px;top:713px" width="13" height="11" viewBox="0 0 13 11"><path d="M5,2.5 L0.7,2.5 L0.7,10.3 L10,10.3 L10,7" fill="none" stroke="#e0e0e0" stroke-width="1.3"/><path d="M4,8 C4,5 6,3.5 9,3.5 L9,1 L12.5,4.2 L9,7.5 L9,5.2 C7,5.2 5,6 4,8 Z" fill="#e0e0e0"/></svg>
<div class="t" style="left:150px;top:715px;font-size:9.5px;color:#c8c8c8">Belge: 5,49M/3,50M</div>
<svg style="left:281px;top:714px" width="6" height="11" viewBox="0 0 6 11"><path d="M1,1 L5,5.5 L1,10" fill="none" stroke="#c8c8c8" stroke-width="1.1"/></svg>
<div class="a" style="left:289px;top:711px;width:1px;height:17px;background:#474747"></div>

<!-- DOCK -->
<div class="a" style="left:1061px;top:62px;width:305px;height:666px;background:#474747"></div>
<div class="a" style="left:1060px;top:75px;width:3px;height:653px;background:#3b3b3b"></div>
<div class="a" style="left:1100px;top:75px;width:3px;height:653px;background:#3d3d3d"></div>
<div class="a" style="left:1063px;top:75px;width:37px;height:653px;background:#535353"></div>
<div class="a" style="left:1103px;top:75px;width:263px;height:27px;background:#474747"></div>
<div class="a" style="left:1103px;top:75px;width:42px;height:27px;background:#535353"></div>
<div class="a" style="left:1103px;top:102px;width:263px;height:171px;background:#535353"></div>
<div class="a" style="left:1103px;top:276px;width:263px;height:27px;background:#474747"></div>
<div class="a" style="left:1103px;top:276px;width:67px;height:27px;background:#535353"></div>
<div class="a" style="left:1103px;top:303px;width:263px;height:425px;background:#535353"></div>



<!-- DOCK HEADERS + ICON COLUMN -->
<svg style="left:1086px;top:66px" width="7" height="5" viewBox="0 0 10 7"><path d="M10,0 L7,0 L4,3.5 L7,7 L10,7 L7,3.5 Z M6,0 L3,0 L0,3.5 L3,7 L6,7 L3,3.5 Z" fill="#d8d8d8"/></svg>
<svg style="left:1352px;top:66px" width="7" height="5" viewBox="0 0 10 7"><path d="M0,0 L3,0 L6,3.5 L3,7 L0,7 L3,3.5 Z M4,0 L7,0 L10,3.5 L7,7 L4,7 L7,3.5 Z" fill="#d8d8d8"/></svg>
<div class="a" style="left:1063px;top:115px;width:37px;height:1px;background:#3e3e3e"></div>
<div class="a" style="left:1063px;top:184px;width:37px;height:1px;background:#3e3e3e"></div>
<div class="a" style="left:1072px;top:79px;width:18px;height:1px;background:#5f5f5f"></div>
<div class="a" style="left:1072px;top:120px;width:18px;height:1px;background:#5f5f5f"></div>
<svg style="left:1074px;top:89px" width="18" height="17" viewBox="0 0 18 17"><path d="M5.5,0.8 L10,3 L10,8 L5.5,10.2 L1,8 L1,3 Z" fill="none" stroke="#e0e0e0" stroke-width="1.2"/><path d="M1,3 L5.5,5.3 L10,3 M5.5,5.3 L5.5,10.2" fill="none" stroke="#e0e0e0" stroke-width="1"/><rect x="12" y="1" width="5" height="4" fill="#e0e0e0"/><rect x="12" y="6" width="5" height="4" fill="#e0e0e0"/><rect x="1" y="12.5" width="16" height="3.5" fill="#e0e0e0"/></svg>
<div class="t" style="left:1075px;top:131px;font-size:16px;color:#e0e0e0">A</div>
<div class="a" style="left:1089px;top:130px;width:1px;height:17px;background:#e0e0e0"></div>
<svg style="left:1076px;top:159px" width="12" height="16" viewBox="0 0 12 16"><path d="M5,1 C2,1 0.5,2.8 0.5,5 C0.5,7.2 2,9 5,9 L5,15.5 L6.5,15.5 L6.5,2.3 L8.5,2.3 L8.5,15.5 L10,15.5 L10,1 Z" fill="#e0e0e0"/></svg>
<!-- doc tab close -->
<svg style="left:323px;top:73px" width="8" height="8" viewBox="0 0 8 8"><path d="M1,1 L7,7 M7,1 L1,7" stroke="#c8c8c8" stroke-width="1.6"/></svg>
<!-- RENK PANEL CONTENT -->
<div class="t" style="left:1112px;top:84px;font-size:10px;font-weight:700;color:#f2f2f2">Renk</div>
<div class="t" style="left:1154px;top:84px;font-size:10px;font-weight:700;color:#a8a8a8">Renk Örnekleri</div>
<div class="a" style="left:1349px;top:85px;width:11px;height:1px;background:#cfcfcf;box-shadow:0 2px 0 #cfcfcf,0 4px 0 #cfcfcf,0 6px 0 #cfcfcf"></div>
<div class="a" style="left:1349px;top:286px;width:11px;height:1px;background:#cfcfcf;box-shadow:0 2px 0 #cfcfcf,0 4px 0 #cfcfcf,0 6px 0 #cfcfcf"></div>
<div class="a" style="left:1122px;top:123px;width:20px;height:19px;background:#fff;border:1px solid #2a2a2a"></div>
<div class="a" style="left:1112px;top:113px;width:21px;height:20px;background:#ff0000;border:1px solid #fff;outline:1px solid #1a1a1a"></div>
<svg style="left:1110px;top:165px" width="15" height="14" viewBox="0 0 15 14"><path d="M7.5,0.5 L14.5,13.5 L0.5,13.5 Z" fill="#e8e8e8"/><rect x="6.6" y="4.5" width="1.8" height="5" fill="#3a3a3a"/><rect x="6.6" y="10.5" width="1.8" height="1.8" fill="#3a3a3a"/></svg>
<div class="a" style="left:1127px;top:165px;width:13px;height:13px;background:#e02020;border:1px solid #eee"></div>
<div class="a" style="left:1148px;top:109px;width:165px;height:158px;background:linear-gradient(to top,#000,rgba(0,0,0,0)),linear-gradient(to right,#fff,#f00)"></div>
<svg style="left:1148px;top:109px;overflow:hidden" width="165" height="158" viewBox="0 0 165 158"><circle cx="165" cy="0" r="6" fill="none" stroke="#ffd8d8" stroke-width="1.5"/></svg>
<div class="a" style="left:1329px;top:110px;width:21px;height:157px;background:linear-gradient(to bottom,#f00 0%,#f0f 16.7%,#00f 33.3%,#0ff 50%,#0f0 66.7%,#ff0 83.3%,#f00 100%)"></div>
<svg style="left:1321px;top:261px" width="9" height="11" viewBox="0 0 9 11"><path d="M1,1 L8,5.5 L1,10 Z" fill="#f0f0f0" stroke="#333" stroke-width="0.6"/></svg>
<div class="t" style="left:1112px;top:284px;font-size:10px;font-weight:700;color:#f2f2f2">Katmanlar</div>

<!-- LAYERS PANEL CONTENT -->
<div class="a" style="left:1107px;top:311px;width:256px;height:24px;background:#4e4e4e"></div>
<div class="a" style="left:1108px;top:312px;width:94px;height:18px;background:#444;border:1px solid #3c3c3c"></div>
<svg style="left:1114px;top:315px" width="12" height="12" viewBox="0 0 12 12"><circle cx="7.5" cy="4.5" r="3.3" fill="none" stroke="#e0e0e0" stroke-width="1.5"/><path d="M5,7 L1.5,10.5" stroke="#e0e0e0" stroke-width="2"/></svg>
<div class="t" style="left:1129px;top:316px;font-size:9.5px;color:#e8e8e8">Çeşit</div>
<svg style="left:1189px;top:318px" width="10" height="7" viewBox="0 0 10 7"><path d="M1,1.5 L5,5.5 L9,1.5" fill="none" stroke="#cfcfcf" stroke-width="1.1"/></svg>
<!-- filter icons -->
<svg style="left:1222px;top:315px" width="13" height="11" viewBox="0 0 13 11"><rect x="0.5" y="0.5" width="12" height="10" fill="none" stroke="#e6e6e6" stroke-width="1.2"/><path d="M2.5,8.5 L5,5 L7,7 L8.5,5.5 L10.5,8.5 Z" fill="#e6e6e6"/></svg>
<svg style="left:1246px;top:315px" width="12" height="12" viewBox="0 0 12 12"><circle cx="6" cy="6" r="5.5" fill="#e6e6e6"/><path d="M10,2 A5.5,5.5 0 0 1 6,11.5 A5.5,5.5 0 0 1 2,10 Z" fill="#555"/></svg>
<div class="t" style="left:1271px;top:314px;font-family:'Liberation Serif',serif;font-size:14px;font-weight:700;color:#e6e6e6">T</div>
<svg style="left:1294px;top:315px" width="12" height="12" viewBox="0 0 12 12"><rect x="1.5" y="1.5" width="9" height="9" fill="none" stroke="#e6e6e6" stroke-width="1.2"/><rect x="0" y="0" width="3" height="3" fill="#e6e6e6"/><rect x="9" y="0" width="3" height="3" fill="#e6e6e6"/><rect x="0" y="9" width="3" height="3" fill="#e6e6e6"/><rect x="9" y="9" width="3" height="3" fill="#e6e6e6"/></svg>
<svg style="left:1319px;top:314px" width="12" height="14" viewBox="0 0 12 14"><path d="M3.5,0.5 L8.5,0.5 L11.5,3.5 L11.5,11 L3.5,11 Z" fill="none" stroke="#e6e6e6" stroke-width="1.1"/><rect x="0.5" y="6.5" width="6" height="7" fill="#e6e6e6"/></svg>
<div class="a" style="left:1353px;top:313px;width:9px;height:18px;border-radius:4.5px;background:#3c3c3c"></div>
<div class="a" style="left:1353px;top:313px;width:9px;height:9px;border-radius:50%;background:#e0e0e0"></div>
<!-- blend row -->
<div class="a" style="left:1108px;top:339px;width:154px;height:18px;background:#444;border:1px solid #3c3c3c"></div>
<div class="t" style="left:1115px;top:343px;font-size:10px;color:#ececec">Normal</div>
<svg style="left:1251px;top:346px" width="10" height="7" viewBox="0 0 10 7"><path d="M1,1.5 L5,5.5 L9,1.5" fill="none" stroke="#cfcfcf" stroke-width="1.1"/></svg>
<div class="t" style="left:1270px;top:343px;font-size:9.6px;color:#c8c8c8">Opaklık:</div>
<div class="t" style="left:1314px;top:343px;font-size:10px;color:#f0f0f0">100%</div>
<svg style="left:1351px;top:346px" width="10" height="7" viewBox="0 0 10 7"><path d="M1,1.5 L5,5.5 L9,1.5" fill="none" stroke="#cfcfcf" stroke-width="1.1"/></svg>
<div class="a" style="left:1308px;top:357px;width:54px;height:1px;background:#707070"></div>
<!-- lock row -->
<div class="t" style="left:1109px;top:371px;font-size:9.5px;color:#c8c8c8">Kilitle:</div>
<svg style="left:1146px;top:370px" width="12" height="12" viewBox="0 0 12 12"><rect x="0.5" y="0.5" width="11" height="11" fill="#e6e6e6" stroke="#e6e6e6"/><rect x="2" y="2" width="2.7" height="2.7" fill="#444"/><rect x="7.3" y="2" width="2.7" height="2.7" fill="#444"/><rect x="4.7" y="4.7" width="2.6" height="2.6" fill="#444"/><rect x="2" y="7.3" width="2.7" height="2.7" fill="#444"/><rect x="7.3" y="7.3" width="2.7" height="2.7" fill="#444"/></svg>
<svg style="left:1167px;top:369px" width="14" height="14" viewBox="0 0 14 14"><path d="M13,1 L7,8 L6,7 L12.5,0.5 Z" fill="#e6e6e6"/><path d="M5.5,7.5 C3,8 2.5,10 1,13 C4,12.5 6.5,11.5 7,9 Z" fill="#e6e6e6"/></svg>
<svg style="left:1189px;top:369px" width="13" height="13" viewBox="0 0 13 13"><path d="M6.5,0.5 L6.5,12.5 M0.5,6.5 L12.5,6.5" stroke="#e6e6e6" stroke-width="1.3"/><path d="M6.5,0 L4.5,2.5 L8.5,2.5 Z M6.5,13 L4.5,10.5 L8.5,10.5 Z M0,6.5 L2.5,4.5 L2.5,8.5 Z M13,6.5 L10.5,4.5 L10.5,8.5 Z" fill="#e6e6e6"/></svg>
<svg style="left:1211px;top:369px" width="14" height="14" viewBox="0 0 14 14"><path d="M3,0 L3,11 L14,11 M0,3 L11,3 L11,14" fill="none" stroke="#e6e6e6" stroke-width="1.2" stroke-dasharray="2,1"/><path d="M8,3 L11,6" stroke="#e6e6e6" stroke-width="1.2"/></svg>
<svg style="left:1234px;top:369px" width="12" height="13" viewBox="0 0 12 13"><path d="M3,6 L3,4 A3,3 0 0 1 9,4 L9,6" fill="none" stroke="#e6e6e6" stroke-width="1.6"/><rect x="0.5" y="6" width="11" height="7" fill="#e6e6e6"/><rect x="5" y="8.5" width="2" height="2" fill="#555"/></svg>
<div class="t" style="left:1276px;top:371px;font-size:10px;color:#c8c8c8">Dolgu:</div>
<div class="t" style="left:1314px;top:371px;font-size:10px;color:#f0f0f0">100%</div>
<svg style="left:1351px;top:374px" width="10" height="7" viewBox="0 0 10 7"><path d="M1,1.5 L5,5.5 L9,1.5" fill="none" stroke="#cfcfcf" stroke-width="1.1"/></svg>
<div class="a" style="left:1308px;top:385px;width:54px;height:1px;background:#707070"></div>
<!-- layer rows -->
<div class="a" style="left:1104px;top:391px;width:247px;height:1px;background:#474747"></div>
<div class="a" style="left:1104px;top:392px;width:247px;height:30px;background:#535353"></div>
<div class="a" style="left:1104px;top:422px;width:247px;height:1px;background:#454545"></div>
<div class="a" style="left:1104px;top:423px;width:247px;height:31px;background:#6a6a6a"></div>
<div class="a" style="left:1104px;top:454px;width:247px;height:1px;background:#454545"></div>
<div class="a" style="left:1104px;top:455px;width:247px;height:31px;background:#535353"></div>
<div class="a" style="left:1104px;top:486px;width:247px;height:1px;background:#474747"></div>
<!-- visibility boxes -->
<div class="a" style="left:1112px;top:399px;width:11px;height:12px;border-right:1px solid #6a6a6a;border-bottom:1px solid #6a6a6a"></div>
<svg style="left:1111px;top:434px" width="14" height="9" viewBox="0 0 14 9"><path d="M0.5,4.5 C3,0.5 11,0.5 13.5,4.5 C11,8.5 3,8.5 0.5,4.5 Z" fill="#e6e6e6"/><circle cx="7" cy="4.2" r="2.4" fill="#555"/></svg>
<svg style="left:1111px;top:466px" width="14" height="9" viewBox="0 0 14 9"><path d="M0.5,4.5 C3,0.5 11,0.5 13.5,4.5 C11,8.5 3,8.5 0.5,4.5 Z" fill="#e6e6e6"/><circle cx="7" cy="4.2" r="2.4" fill="#555"/></svg>
<!-- thumbs -->
<div class="a" style="left:1137px;top:394px;width:31px;height:24px;background-color:#fff;background-image:linear-gradient(45deg,#cdcdcd 25%,transparent 25%,transparent 75%,#cdcdcd 75%),linear-gradient(45deg,#cdcdcd 25%,transparent 25%,transparent 75%,#cdcdcd 75%);background-size:8px 8px;background-position:0 0,4px 4px;border:1px solid #2c2c2c"></div>
<div class="a" style="left:1137px;top:426px;width:31px;height:25px;background-color:#fff;background-image:linear-gradient(45deg,#cdcdcd 25%,transparent 25%,transparent 75%,#cdcdcd 75%),linear-gradient(45deg,#cdcdcd 25%,transparent 25%,transparent 75%,#cdcdcd 75%);background-size:8px 8px;background-position:0 0,4px 4px;border:1px solid #2c2c2c"></div>
<svg style="left:1135px;top:424px" width="36" height="30" viewBox="0 0 36 30"><path d="M0.5,7 L0.5,0.5 L7,0.5 M29,0.5 L35.5,0.5 L35.5,7 M35.5,23 L35.5,29.5 L29,29.5 M7,29.5 L0.5,29.5 L0.5,23" fill="none" stroke="#f0f0f0" stroke-width="1"/><path d="M18,10 L17,15 L15,19 L16,22 L18,21" fill="none" stroke="#444" stroke-width="1.2"/></svg>
<div class="a" style="left:1137px;top:458px;width:31px;height:24px;background:#fff;border:1px solid #2c2c2c"></div>
<div class="t" style="left:1179px;top:403px;font-size:10px;color:#ededed">nike-ws-swoosh-h86-blue-32993</div>
<div class="t" style="left:1179px;top:435px;font-size:10px;letter-spacing:-0.5px;color:#f2f2f2">0_70ce2_64386733_L</div>
<div class="t" style="left:1179px;top:467px;font-size:10px;font-style:italic;color:#ededed">Arka Plan</div>
<svg style="left:1323px;top:465px" width="11" height="12" viewBox="0 0 11 12"><path d="M3,5 L3,3.5 A2.5,2.5 0 0 1 8,3.5 L8,5" fill="none" stroke="#e6e6e6" stroke-width="1.2"/><rect x="0.6" y="5.2" width="9.8" height="6.2" fill="none" stroke="#e6e6e6" stroke-width="1.2"/><rect x="4.7" y="7.5" width="1.6" height="1.6" fill="#e6e6e6"/></svg>
<!-- bottom icons of layers panel -->
<div class="a" style="left:1103px;top:703px;width:263px;height:1px;background:#4a4a4a"></div>
<svg style="left:1161px;top:710px" width="15" height="9" viewBox="0 0 15 9"><rect x="0.7" y="1.5" width="7" height="6" rx="3" fill="none" stroke="#8c8c8c" stroke-width="1.3"/><rect x="7.3" y="1.5" width="7" height="6" rx="3" fill="none" stroke="#8c8c8c" stroke-width="1.3"/></svg>
<div class="t" style="left:1189px;top:707px;font-family:'Liberation Serif',serif;font-size:14px;font-style:italic;color:#e6e6e6">fx</div>
<svg style="left:1215px;top:709px" width="14" height="11" viewBox="0 0 14 11"><rect x="0" y="0" width="14" height="11" fill="#e6e6e6"/><circle cx="7" cy="5.5" r="3.2" fill="#444"/></svg>
<svg style="left:1243px;top:708px" width="13" height="13" viewBox="0 0 13 13"><circle cx="6.5" cy="6.5" r="6" fill="#e6e6e6"/><path d="M11,2.2 A6,6 0 0 1 6.5,12.5 A6,6 0 0 1 2.2,11 Z" fill="#555"/></svg>
<svg style="left:1270px;top:709px" width="14" height="11" viewBox="0 0 14 11"><path d="M0,1 L5,1 L6.5,2.5 L14,2.5 L14,11 L0,11 Z" fill="#e6e6e6"/></svg>
<svg style="left:1298px;top:708px" width="12" height="12" viewBox="0 0 12 12"><path d="M3.5,0.6 L11.4,0.6 L11.4,11.4 L0.6,11.4 L0.6,3.5 Z" fill="none" stroke="#e6e6e6" stroke-width="1.2"/><path d="M0.6,3.5 L3.5,3.5 L3.5,0.6" fill="none" stroke="#e6e6e6" stroke-width="1.2"/></svg>
<svg style="left:1325px;top:708px" width="12" height="13" viewBox="0 0 12 13"><path d="M0,2 L12,2 M4,2 L4,0.5 L8,0.5 L8,2" fill="none" stroke="#e6e6e6" stroke-width="1.1"/><path d="M1.5,3 L2.3,12.5 L9.7,12.5 L10.5,3" fill="none" stroke="#e6e6e6" stroke-width="1.2"/><path d="M4.2,4.5 L4.2,11 M6,4.5 L6,11 M7.8,4.5 L7.8,11" stroke="#e6e6e6" stroke-width="0.9"/></svg>
<!-- TASKBAR -->
<div class="a" style="left:0;top:728px;width:1366px;height:40px;background:#04060c"></div>

<!-- TASKBAR CONTENT -->
<svg style="left:15px;top:739px" width="18" height="18" viewBox="0 0 18 18"><path d="M1,2.5 L7,1.6 L7,8.2 L1,8.2 Z M8,1.4 L17.2,0 L17.2,8.2 L8,8.2 Z M1,9.2 L7,9.2 L7,15.8 L1,15 Z M8,9.2 L17.2,9.2 L17.2,17 L8,15.9 Z" fill="#ffffff"/></svg>
<svg style="left:62px;top:738px" width="20" height="20" viewBox="0 0 20 20"><circle cx="12.3" cy="7.2" r="5.2" fill="none" stroke="#f0f0f0" stroke-width="1.3"/><path d="M8.5,11 L2,17.8" stroke="#f0f0f0" stroke-width="1.4"/></svg>
<svg style="left:109px;top:740px" width="22" height="16" viewBox="0 0 22 16"><rect x="5.6" y="0.7" width="10.8" height="14" fill="none" stroke="#f0f0f0" stroke-width="1.3"/><path d="M3.5,3 L1.3,3 L1.3,12.3 L3.5,12.3 M18.5,3 L20.7,3 L20.7,12.3 L18.5,12.3" fill="none" stroke="#f0f0f0" stroke-width="1.3"/></svg>
<!-- explorer -->
<svg style="left:160px;top:738px" width="22" height="20" viewBox="0 0 22 20"><path d="M1,2 L8,2 L9.5,4 L21,4 L21,18 L1,18 Z" fill="#e8c25a"/><path d="M1,6 L21,6 L21,18 L1,18 Z" fill="#f4d77a"/><path d="M6,12 L16,12 L16,14 L14,14 L14,18 L8,18 L8,14 L6,14 Z" fill="#3a8ad6"/><rect x="6" y="11" width="10" height="2" fill="#5aa8e8"/></svg>
<div class="a" style="left:151px;top:765px;width:40px;height:3px;background:#7ab8e8"></div>
<!-- firefox -->
<svg style="left:208px;top:736px" width="24" height="24" viewBox="0 0 24 24"><defs><radialGradient id="ffg" cx="0.55" cy="0.4" r="0.6"><stop offset="0" stop-color="#5d8ad8"/><stop offset="1" stop-color="#2d3d8a"/></radialGradient><linearGradient id="ffo" x1="0" y1="0" x2="0" y2="1"><stop offset="0" stop-color="#ffb13a"/><stop offset="0.5" stop-color="#f26b21"/><stop offset="1" stop-color="#d9381f"/></linearGradient></defs><circle cx="12.5" cy="11.5" r="10" fill="url(#ffg)"/><path d="M4,5 C2,8 1.5,12 2.5,15 C4,20 9,23 13,23 C18.5,23 23,18.5 23,12.5 C23,9 21.5,6 19,4 C20.5,7 20.5,10 19,13 C17.5,16 14,17.5 11,16.5 C8,15.5 6.5,13 7,10 C7.3,8 8.5,6.5 10,6 C8,5 6,5 4,5 Z" fill="url(#ffo)"/><path d="M10,6 C11,3.5 13,2 15,2 C13.5,3.5 13,5 13.5,6.5 Z" fill="#f7902a"/></svg>
<div class="a" style="left:200px;top:765px;width:40px;height:3px;background:#7ab8e8"></div>
<!-- chrome -->
<svg style="left:257px;top:737px" width="24" height="24" viewBox="0 0 24 24"><circle cx="12" cy="12" r="11" fill="#db4437"/><path d="M12,12 L2.5,6.5 A11,11 0 0 0 12,23 Z" fill="#0f9d58"/><path d="M12,12 L12,23 A11,11 0 0 0 21.5,6.5 Z" fill="#f4c20d"/><path d="M12,12 L2.5,6.5 A11,11 0 0 1 21.5,6.5 Z" fill="#db4437"/><circle cx="12" cy="12" r="5.3" fill="#ffffff"/><circle cx="12" cy="12" r="4.2" fill="#4285f4"/></svg>
<div class="a" style="left:249px;top:765px;width:40px;height:3px;background:#7ab8e8"></div>
<div class="a" style="left:281px;top:765px;width:8px;height:3px;background:#5a8ab8"></div>
<!-- skype -->
<div class="a" style="left:294px;top:728px;width:48px;height:40px;background:#9a5a22"></div>
<div class="a" style="left:294px;top:765px;width:48px;height:3px;background:#f08a18"></div>
<svg style="left:306px;top:735px" width="26" height="26" viewBox="0 0 26 26"><circle cx="7" cy="7" r="6" fill="#2aa8e8"/><circle cx="17" cy="17" r="6" fill="#2aa8e8"/><circle cx="12" cy="12" r="9.5" fill="#2aa8e8"/><text x="12" y="17.5" font-family="Liberation Sans" font-size="15" font-weight="700" fill="#ffffff" text-anchor="middle">S</text><circle cx="19.5" cy="20" r="5.2" fill="#f5b800" stroke="#8a5a10" stroke-width="0.6"/><text x="19.5" y="23" font-family="Liberation Sans" font-size="7.5" font-weight="700" fill="#222" text-anchor="middle">1</text></svg>
<!-- photoshop -->
<div class="a" style="left:342px;top:728px;width:49px;height:40px;background:#3b3b3b"></div>
<div class="a" style="left:342px;top:765px;width:49px;height:3px;background:#7ab8e8"></div>
<div class="a" style="left:356px;top:737px;width:21px;height:20px;background:#0a1a2c;border:1.5px solid #36b8e8"></div>
<div class="t" style="left:359px;top:741px;font-size:11px;font-weight:700;color:#36b8e8;letter-spacing:-0.3px">Ps</div>
<!-- tray -->
<svg style="left:1156px;top:743px" width="14" height="9" viewBox="0 0 14 9"><path d="M1,8 L7,2 L13,8" fill="none" stroke="#f0f0f0" stroke-width="1.3"/></svg>
<svg style="left:1179px;top:741px" width="17" height="13" viewBox="0 0 17 13"><path d="M2,0 L2,2.5 M5,0 L5,2.5" stroke="#f0f0f0" stroke-width="1"/><rect x="1" y="2.5" width="5" height="3" fill="#f0f0f0"/><path d="M3.5,5.5 L3.5,8" stroke="#f0f0f0" stroke-width="1.2"/><rect x="4.5" y="5.5" width="10.5" height="6.5" fill="none" stroke="#f0f0f0" stroke-width="1.1"/><rect x="6" y="7" width="7.5" height="3.5" fill="#f0f0f0"/><rect x="15.2" y="7.3" width="1.5" height="3" fill="#f0f0f0"/></svg>
<svg style="left:1205px;top:742px" width="15" height="14" viewBox="0 0 15 14"><path d="M1,13 A12,12 0 0 1 13,1 M3.5,13 A9.5,9.5 0 0 1 13,3.5 M6,13 A7,7 0 0 1 13,6 M8.5,13 A4.5,4.5 0 0 1 13,8.5" fill="none" stroke="#d8d8d8" stroke-width="1"/><circle cx="12" cy="12" r="1.5" fill="#f0f0f0"/></svg>
<svg style="left:1227px;top:741px" width="17" height="14" viewBox="0 0 17 14"><path d="M1,4.5 L4,4.5 L8,1 L8,13 L4,9.5 L1,9.5 Z" fill="none" stroke="#f0f0f0" stroke-width="1.1"/><path d="M10,4.5 A3,3 0 0 1 10,9.5 M12,3 A5.5,5.5 0 0 1 12,11 M14,1.2 A8,8 0 0 1 14,12.8" fill="none" stroke="#f0f0f0" stroke-width="1.1"/></svg>
<div class="t" style="left:1266px;top:733px;font-size:11.5px;letter-spacing:-0.5px;color:#f4f4f4">14:11</div>
<div class="t" style="left:1254px;top:751px;font-size:11.5px;letter-spacing:-0.6px;color:#f4f4f4">17.01.2017</div>
<svg style="left:1324px;top:739px" width="18" height="18" viewBox="0 0 18 18"><path d="M1,1 L17,1 L17,13 L11,13 L9,16 L7,13 L1,13 Z" fill="none" stroke="#f0f0f0" stroke-width="1.2"/></svg>
<div class="a" style="left:1361px;top:728px;width:1px;height:40px;background:#6a6a6a"></div>
</body></html>
